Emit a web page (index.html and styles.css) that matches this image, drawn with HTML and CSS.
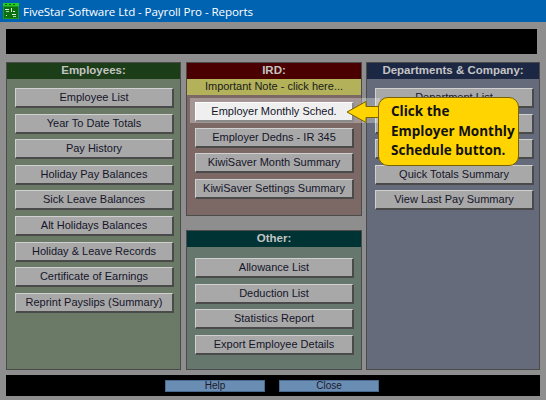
FILE: index.html
```html
<!DOCTYPE html>
<html>
<head>
<meta charset="utf-8">
<link rel="stylesheet" href="styles.css">
</head>
<body>
<div class="window">
  <div class="titlebar">
    <svg class="appicon" width="16" height="16" viewBox="0 0 16 16">
      <rect x="0" y="0" width="16" height="16" fill="#1d9a1d"/>
      <rect x="0" y="0" width="16" height="3" fill="#22cc22"/>
      <rect x="2" y="1" width="2" height="1" fill="#0a5a0a"/>
      <rect x="6" y="1" width="2" height="1" fill="#0a5a0a"/>
      <rect x="10" y="1" width="2" height="1" fill="#0a5a0a"/>
      <rect x="1" y="4" width="14" height="11" fill="#0e6e12"/>
      <rect x="2" y="6" width="4" height="1" fill="#d8f0d8"/>
      <rect x="8" y="5" width="1" height="4" fill="#d8f0d8"/>
      <rect x="3" y="8" width="3" height="1" fill="#a8e0a8"/>
      <rect x="10" y="8" width="2" height="1" fill="#d8f0d8"/>
      <rect x="9" y="11" width="4" height="1" fill="#d8f0d8"/>
      <rect x="10" y="13" width="3" height="1" fill="#a8e0a8"/>
      <rect x="3" y="12" width="1" height="1" fill="#d8f0d8"/>
    </svg>
    <span class="title">FiveStar Software Ltd - Payroll Pro - Reports</span>
  </div>
  <div class="content">
    <div class="topbar"></div>
    <div class="panels">
      <div class="panel emp">
        <div class="phead">Employees:</div>
        <div class="buttons">
          <div class="btn">Employee List</div>
          <div class="btn">Year To Date Totals</div>
          <div class="btn">Pay History</div>
          <div class="btn">Holiday Pay Balances</div>
          <div class="btn">Sick Leave Balances</div>
          <div class="btn">Alt Holidays Balances</div>
          <div class="btn">Holiday &amp; Leave Records</div>
          <div class="btn">Certificate of Earnings</div>
          <div class="btn">Reprint Payslips (Summary)</div>
        </div>
      </div>
      <div class="midcol">
        <div class="panel ird">
          <div class="phead">IRD:</div>
          <div class="note">Important Note - click here...</div>
          <div class="buttons">
            <div class="btn hl">Employer Monthly Sched.</div>
            <div class="btn">Employer Dedns - IR 345</div>
            <div class="btn">KiwiSaver Month Summary</div>
            <div class="btn">KiwiSaver Settings Summary</div>
          </div>
        </div>
        <div class="panel other">
          <div class="phead">Other:</div>
          <div class="buttons">
            <div class="btn">Allowance List</div>
            <div class="btn">Deduction List</div>
            <div class="btn">Statistics Report</div>
            <div class="btn">Export Employee Details</div>
          </div>
        </div>
      </div>
      <div class="panel dept">
        <div class="phead">Departments &amp; Company:</div>
        <div class="buttons">
          <div class="btn">Department List</div>
          <div class="btn">Department Totals</div>
          <div class="btn">Company Totals</div>
          <div class="btn">Quick Totals Summary</div>
          <div class="btn">View Last Pay Summary</div>
        </div>
      </div>
    </div>
    <div class="bottombar">
      <div class="bbtn">Help</div>
      <div class="bbtn">Close</div>
    </div>
  </div>
  <div class="halo"></div>
  <svg class="arrow" width="40" height="28" viewBox="0 0 40 28">
    <path d="M2 13 L21 2.5 L21 7.5 L38 7.5 L38 18.5 L21 18.5 L21 23.5 Z" fill="#ffd400" stroke="#7a6200" stroke-width="1" stroke-linejoin="round"/>
  </svg>
  <div class="callout">Click the<br>Employer Monthly<br>Schedule button.</div>
</div>
</body>
</html>
```

FILE: styles.css
```css
* { box-sizing: border-box; }
html, body { margin: 0; padding: 0; }
body {
  width: 546px;
  height: 400px;
  overflow: hidden;
  background: #8e8e8e;
  font-family: "Liberation Sans", Arial, sans-serif;
}
.window {
  position: relative;
  width: 546px;
  height: 400px;
}
.titlebar {
  height: 22px;
  background: #0063b1;
  display: flex;
  align-items: center;
  padding-left: 3px;
}
.appicon { flex: none; }
.title {
  margin-left: 4px;
  color: #ffffff;
  font-family: "Open Sans", "Noto Sans", sans-serif;
  font-size: 11.6px;
  letter-spacing: -0.1px;
}
.content {
  padding: 7px 0 0 6px;
}
.topbar {
  width: 531px;
  height: 25px;
  background: #000000;
}
.panels {
  margin-top: 8px;
  display: flex;
  height: 308px;
  width: 534px;
}
.panel {
  border: 1px solid #4b4b4b;
  display: flex;
  flex-direction: column;
}
.phead {
  height: 16px;
  line-height: 15px;
  text-align: center;
  font-weight: bold;
  font-size: 11.5px;
  color: #c4c4c4;
  flex: none;
}
.buttons {
  display: flex;
  flex-direction: column;
  gap: 5.6px;
  padding: 0 0 0 8px;
}
.btn {
  width: 159px;
  height: 20px;
  background: #a8a8a8;
  border-top: 1px solid #d0d0d0;
  border-left: 1px solid #d0d0d0;
  border-right: 2px solid #4a4a4a;
  border-bottom: 2px solid #4a4a4a;
  color: #15152a;
  font-size: 11px;
  line-height: 17px;
  text-align: center;
  white-space: nowrap;
}
.btn.hl {
  background: #efefef;
  border-top: 1px solid #ffffff;
  border-left: 1px solid #ffffff;
  border-right: 2px solid #8a8a8a;
  border-bottom: 2px solid #8a8a8a;
  position: relative;
  z-index: 3;
}

.emp {
  width: 175px;
  background: #6b7a67;
}
.emp .phead { background: #1b3d17; }
.emp .buttons { padding-top: 9px; }

.midcol {
  width: 176px;
  margin-left: 5px;
  display: flex;
  flex-direction: column;
  gap: 14px;
}
.ird {
  height: 154px;
  background: #7c6966;
}
.ird .phead { background: #4a0000; }
.note {
  height: 16px;
  background: #b3b15a;
  color: #20201a;
  font-size: 11px;
  line-height: 15px;
  text-align: center;
}
.ird .buttons { padding-top: 7px; }

.other {
  flex: 1;
  background: #66786d;
}
.other .phead { background: #003333; }
.other .buttons { padding-top: 11px; }

.dept {
  width: 174px;
  margin-left: 4px;
  background: #656b7a;
}
.dept .phead { background: #1c2744; }
.dept .buttons { padding-top: 9px; }

.bottombar {
  margin-top: 5px;
  width: 534px;
  height: 21px;
  background: #000000;
  display: flex;
  align-items: center;
  padding-left: 159px;
  gap: 14px;
}
.bbtn {
  width: 100px;
  height: 12px;
  background: #6a8db4;
  border: 1px solid #4b6a90;
  color: #1a1a2a;
  font-size: 10px;
  line-height: 10px;
  text-align: center;
}

.halo {
  position: absolute;
  left: 190px;
  top: 98px;
  width: 190px;
  height: 25px;
  background: rgba(255, 255, 255, 0.3);
  z-index: 2;
}
.arrow {
  position: absolute;
  left: 345px;
  top: 99px;
  z-index: 4;
}
.callout {
  position: absolute;
  left: 378px;
  top: 97px;
  width: 141px;
  height: 69px;
  background: #ffd400;
  border: 1px solid #7a6200;
  border-radius: 10px;
  padding: 4px 0 0 12px;
  font-family: "Open Sans", "Noto Sans", sans-serif;
  font-weight: bold;
  font-size: 13.5px;
  line-height: 19.5px;
  color: #111111;
  z-index: 5;
  white-space: nowrap;
}
```
